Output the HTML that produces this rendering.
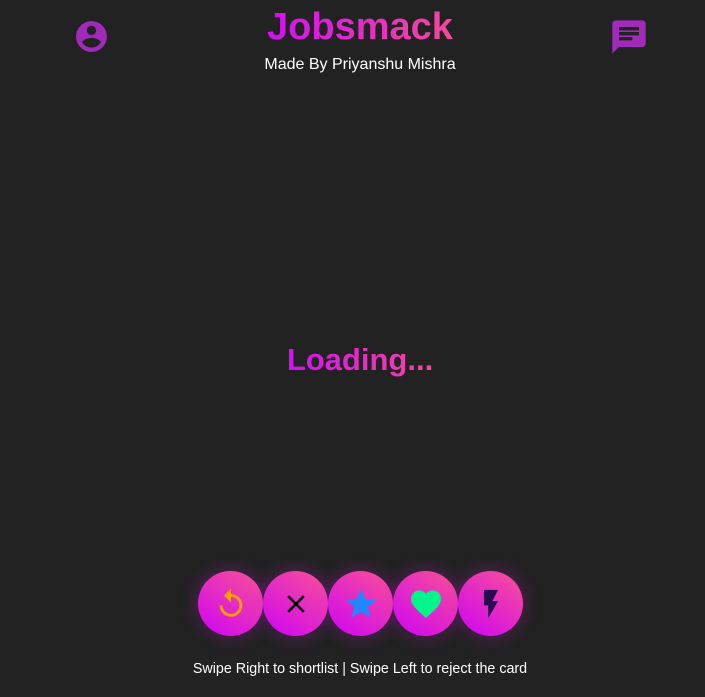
<!DOCTYPE html>
<html><head><style>
body{margin:0;width:705px;height:697px;background:#222;font-family:"Liberation Sans",sans-serif;position:relative;overflow:hidden}
.c{position:absolute;left:0;width:720px;text-align:center;margin:0}
.g{background:linear-gradient(90deg,#d010f2,#f5489c);-webkit-background-clip:text;background-clip:text;color:transparent;font-weight:bold;display:inline-block}
.title{top:4px;font-size:38px;line-height:46px}
.sub{top:56px;color:#fff;font-size:16px}
.load{top:342px;font-size:31px;line-height:36px}
.btn{position:absolute;top:571px;width:65px;height:65px;border-radius:50%;background:linear-gradient(35deg,#d50fe8 15%,#f54a9e 90%);box-shadow:0 0 18px rgba(210,20,220,.35);display:flex;align-items:center;justify-content:center}
.foot{top:661px;color:#fff;font-size:14.3px}
svg{display:block}
</style></head><body>
<svg style="position:absolute;left:73px;top:18px" width="37" height="37" viewBox="0 0 24 24"><path fill="#a12ab8" d="M12 2C6.48 2 2 6.48 2 12s4.48 10 10 10 10-4.48 10-10S17.52 2 12 2zm0 3c1.66 0 3 1.34 3 3s-1.34 3-3 3-3-1.34-3-3 1.34-3 3-3zm0 14.2c-2.5 0-4.71-1.28-6-3.22.03-1.99 4-3.08 6-3.08 1.99 0 5.97 1.09 6 3.08-1.29 1.94-3.5 3.22-6 3.22z"/></svg>
<svg style="position:absolute;left:609px;top:17px" width="40" height="40" viewBox="0 0 24 24"><path fill="#a12ab8" d="M20 2H4c-1.1 0-2 .9-2 2v18l4-4h14c1.1 0 2-.9 2-2V4c0-1.1-.9-2-2-2zM6 9h12v2H6V9zm8 5H6v-2h8v2zm4-6H6V6h12v2z"/></svg>
<div class="c title"><span class="g">Jobsmack</span></div>
<div class="c sub">Made By Priyanshu Mishra</div>
<div class="c load"><span class="g">Loading...</span></div>
<div class="btn" style="left:198px"><svg width="34" height="34" viewBox="0 0 24 24"><path fill="#ffa000" d="M12 5V1L7 6l5 5V7c3.31 0 6 2.690 6 6s-2.69 6-6 6-6-2.69-6-6H4c0 4.42 3.58 8 8 8s8-3.58 8-8-3.58-8-8-8z"/></svg></div>
<div class="btn" style="left:263px"><svg width="30" height="30" viewBox="0 0 24 24"><path fill="#000" d="M19 6.41L17.59 5 12 10.59 6.41 5 5 6.41 10.59 12 5 17.59 6.41 19 12 13.41 17.59 19 19 17.59 13.41 12z"/></svg></div>
<div class="btn" style="left:328px"><svg width="36" height="36" viewBox="0 0 24 24"><path fill="#1e88ff" d="M12 17.27L18.18 21l-1.64-7.030L22 9.24l-7.19-.61L12 2 9.19 8.63 2 9.24l5.46 4.73L5.82 21z"/></svg></div>
<div class="btn" style="left:393px"><svg width="36" height="36" viewBox="0 0 24 24"><path fill="#00f58a" d="M12 21.35l-1.45-1.32C5.4 15.36 2 12.28 2 8.5 2 5.42 4.42 3 7.5 3c1.74 0 3.41.81 4.5 2.09C13.09 3.81 14.76 3 16.5 3 19.58 3 22 5.42 22 8.5c0 3.78-3.4 6.860-8.55 11.54L12 21.35z"/></svg></div>
<div class="btn" style="left:458px"><svg width="34" height="34" viewBox="0 0 24 24"><path fill="#2a0a50" d="M7 2v11h3v9l7-12h-4l4-8z"/></svg></div>
<div class="c foot">Swipe Right to shortlist | Swipe Left to reject the card</div>
</body></html>
